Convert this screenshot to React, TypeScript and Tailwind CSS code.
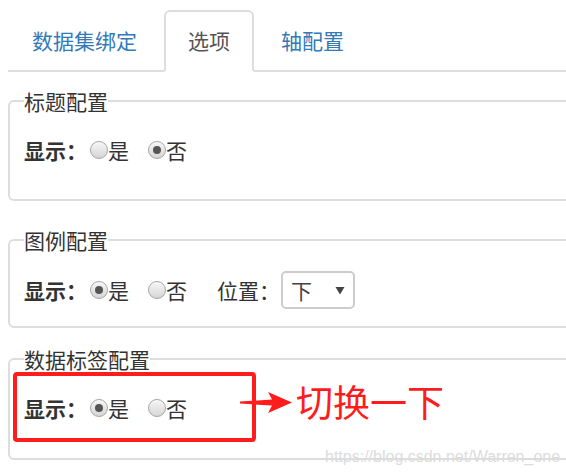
import React from "react";

const Radio = ({ checked }: { checked?: boolean }) => (
  <span className="flex h-[18px] w-[18px] items-center justify-center rounded-full border border-[#a3a3a3] bg-gradient-to-b from-[#f6f6f6] to-[#d6d6d6] shadow-[inset_0_1px_1px_rgba(255,255,255,0.8)]">
    {checked && <span className="h-[8px] w-[8px] rounded-full bg-[#555]" />}
  </span>
);

const RadioItem = ({ label, checked, className = "" }: { label: string; checked?: boolean; className?: string }) => (
  <label className={`flex items-center ${className}`}>
    <Radio checked={checked} />
    <span className="leading-[30px]">{label}</span>
  </label>
);

const ShowRow = ({ yes }: { yes: boolean }) => (
  <>
    <span className="font-bold leading-[30px]">显示：</span>
    <RadioItem label="是" checked={yes} className="ml-[3px]" />
    <RadioItem label="否" checked={!yes} className="ml-[19px]" />
  </>
);

const tabs = ["数据集绑定", "选项", "轴配置"];

export default function App() {
  return (
    <div className="relative h-[475px] w-[566px] overflow-hidden bg-white font-['Noto_Sans_CJK_SC','Liberation_Sans',sans-serif] text-[#333]">
      <div className="w-[640px] pl-2 pt-[10px]">
        {/* tabs */}
        <ul className="flex border-b-2 border-[#ddd]">
          {tabs.map((t, i) => (
            <li key={t} className="-mb-[2px] mr-[3px]">
              <span
                className={`block rounded-t-[6px] border-2 px-[22px] pt-[13px] pb-[15px] text-[21px] leading-[30px] ${
                  i === 1
                    ? "border-[#ddd] border-b-white bg-white text-[#555]"
                    : "border-transparent text-[#337ab7]"
                }`}
              >
                {t}
              </span>
            </li>
          ))}
        </ul>

        <fieldset className="mt-[14px] rounded-[6px] border-2 border-[#ddd] px-[14px] pt-[19px] pb-[34px]">
          <legend className="px-0 text-[21px] leading-[30px]">标题配置</legend>
          <div className="flex h-[30px] items-center text-[21px]">
            <ShowRow yes={false} />
          </div>
        </fieldset>

        <fieldset className="mt-[24px] rounded-[6px] border-2 border-[#ddd] px-[14px] pt-[16px] pb-[17px]">
          <legend className="px-0 text-[21px] leading-[30px]">图例配置</legend>
          <div className="flex h-[38px] items-center text-[21px]">
            <ShowRow yes={true} />
            <span className="ml-[30px] leading-[30px]">位置：</span>
            <div className="ml-px flex h-[38px] w-[74px] items-center justify-between rounded-[5px] border-2 border-[#ccc] pl-[8px] pr-[8px] text-[#444]">
              <span className="leading-[30px]">下</span>
              <svg width="10" height="9" viewBox="0 0 10 9">
                <path d="M0.5 1 L9.5 1 L5 8.5 Z" fill="#444" />
              </svg>
            </div>
          </div>
        </fieldset>

        <fieldset className="mt-[16px] rounded-[6px] border-2 border-[#ddd] px-[14px] pt-[19px] pb-[35px]">
          <legend className="px-0 text-[21px] leading-[30px]">数据标签配置</legend>
          <div className="flex h-[30px] items-center text-[21px]">
            <ShowRow yes={true} />
          </div>
        </fieldset>
      </div>

      {/* annotation overlay */}
      <div className="absolute left-[13px] top-[372px] h-[70px] w-[243px] rounded-[4px] border-4 border-[#ff1c1c]" />
      <svg className="absolute left-[238px] top-[390px]" width="56" height="26" viewBox="0 0 56 26">
        <path d="M2 11.5 L34 9.5 L30 2 L54 12.5 L30 23 L34 15.5 L2 13.5 Z" fill="#ff1c1c" />
      </svg>
      <div className="absolute left-[296px] top-[383px] text-[37px] leading-[37px] text-[#ff1c1c]">切换一下</div>
      <div className="absolute left-[325px] top-[447px] font-['Liberation_Sans',sans-serif] text-[16px] leading-[20px] text-[#dcdcdc]">
        https://blog.csdn.net/Warren_one
      </div>
    </div>
  );
}
